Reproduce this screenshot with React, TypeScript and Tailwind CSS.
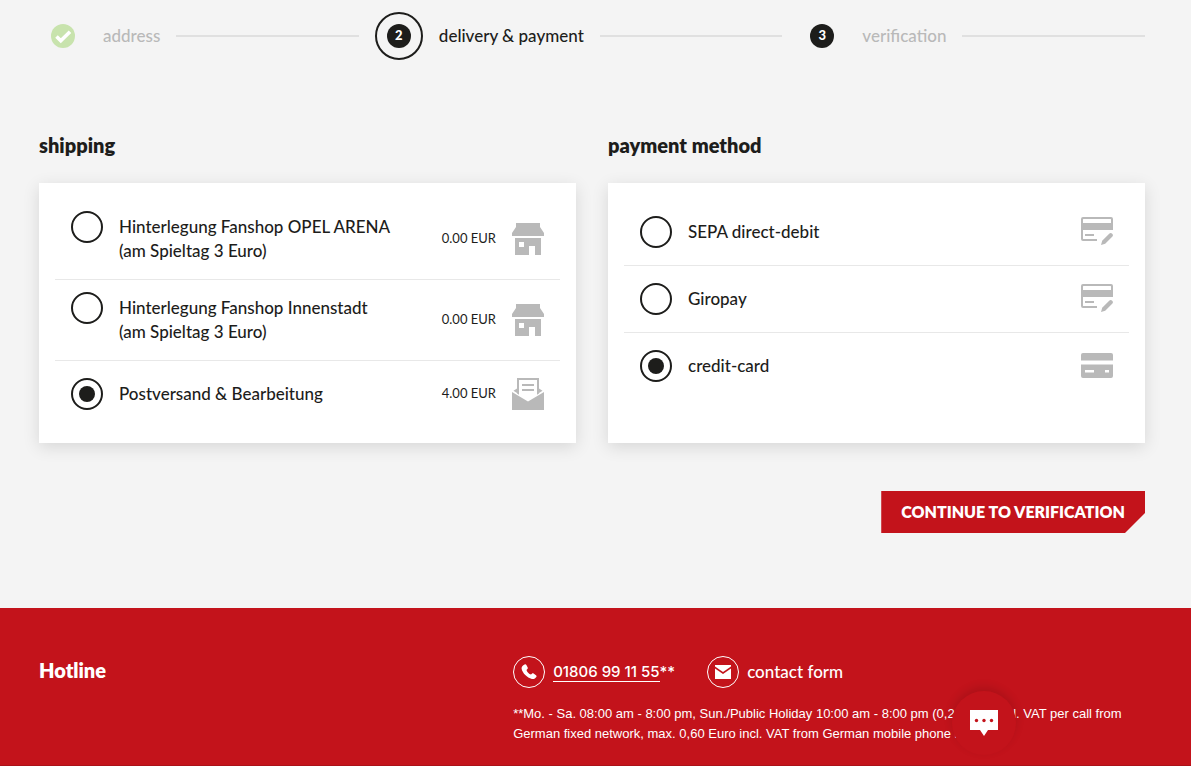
import { useState } from "react";

const ShopIcon = () => (
  <svg width="32" height="32" viewBox="0 0 32 32" fill="#b9b9b9" aria-hidden="true">
    <path d="M4 0h24v4l4 6v3H0v-3l4-6z" />
    <path fillRule="evenodd" d="M3 15h26v17h-6v-9h-6v9H3zM7 19v5h5v-5z" />
  </svg>
);

const LetterIcon = () => (
  <svg width="32" height="32" viewBox="0 0 32 32" fill="#b9b9b9" aria-hidden="true">
    <path d="M5 0h22v15.500l-2 1.200V2H7v14.700l-2-1.200z" />
    <path d="M10 6h12v2H10zM10 11h12v2H10z" />
    <path d="M5 10.500V15L1.500 12.800zM27 10.500V15l3.500-2.200z" />
    <path d="M0 14l16 9.500L32 14v18H0z" />
  </svg>
);

const DebitIcon = () => (
  <svg width="32" height="32" viewBox="0 0 32 32" fill="#b9b9b9" aria-hidden="true">
    <path
      fillRule="evenodd"
      d="M2 1h28a2 2 0 0 1 2 2v11H2v8.500a.5.500 0 0 0 .5.500H16v2H2a2 2 0 0 1-2-2V3a2 2 0 0 1 2-2zM2 3.500V7h28V3.500a.5.500 0 0 0-.5-.5h-27a.5.500 0 0 0-.5.500z"
    />
    <path d="M4 18h9v2H4z" />
    <path d="M20 29l1.200-4.200 7-7a2.100 2.100 0 0 1 3 3l-7 7z" />
  </svg>
);

const CreditIcon = () => (
  <svg width="32" height="32" viewBox="0 0 32 32" fill="#b9b9b9" aria-hidden="true">
    <path d="M2 3h28a2 2 0 0 1 2 2v5.500H0V5a2 2 0 0 1 2-2z" />
    <path
      fillRule="evenodd"
      d="M0 14.500h32V26a2 2 0 0 1-2 2H2a2 2 0 0 1-2-2zM4 20v2.500h9V20zM24 20v2.500h4V20z"
    />
  </svg>
);

const shippingOptions = [
  { id: "fanshop-arena", label: "Hinterlegung Fanshop OPEL ARENA", note: "(am Spieltag 3 Euro)", price: "0.00 EUR", icon: <ShopIcon /> },
  { id: "fanshop-city", label: "Hinterlegung Fanshop Innenstadt", note: "(am Spieltag 3 Euro)", price: "0.00 EUR", icon: <ShopIcon /> },
  { id: "post", label: "Postversand & Bearbeitung", price: "4.00 EUR", icon: <LetterIcon /> },
];

const paymentOptions = [
  { id: "sepa", label: "SEPA direct-debit", icon: <DebitIcon /> },
  { id: "giropay", label: "Giropay", icon: <DebitIcon /> },
  { id: "credit-card", label: "credit-card", icon: <CreditIcon /> },
];

interface Option {
  id: string;
  label: string;
  note?: string;
  price?: string;
  icon: React.ReactNode;
}

interface OptionCardProps {
  title: string;
  name: string;
  options: Option[];
  value: string;
  onChange: (id: string) => void;
}

function OptionCard({ title, name, options, value, onChange }: OptionCardProps) {
  return (
    <section className="flex flex-col">
      <h2 className="mb-6 text-xl leading-7 font-extrabold">{title}</h2>
      <div className="flex-1 bg-white p-4 shadow-[0_4px_16px_rgba(0,0,0,0.12)]">
        {options.map((option) => (
          <div key={option.id} className="border-b border-[#e8e8e8] px-4 py-4 last:border-b-0">
            <div className="flex min-h-[34px] items-center gap-4">
              <label htmlFor={option.id} className="flex flex-1 cursor-pointer items-start gap-4">
                <input
                  type="radio"
                  id={option.id}
                  name={name}
                  checked={value === option.id}
                  onChange={() => onChange(option.id)}
                  className="-my-1 size-8 shrink-0 appearance-none rounded-full border-2 border-[#1d1d1b] bg-white p-1.5 checked:bg-[#1d1d1b] checked:bg-clip-content"
                />
                <span className="leading-6 font-medium">
                  {option.label}
                  {option.note && <span className="block">{option.note}</span>}
                </span>
              </label>
              {option.price && <span className="text-[13px]">{option.price}</span>}
              {option.icon}
            </div>
          </div>
        ))}
      </div>
    </section>
  );
}

export default function App() {
  const [shipping, setShipping] = useState("post");
  const [payment, setPayment] = useState("credit-card");

  return (
    <div className="min-h-screen bg-[#f4f4f4] font-['Lato',sans-serif] text-[17px] text-[#1d1d1b]">
      <main className="pt-3 pr-[46px] pb-[75px] pl-[39px]">
        {/* Steps */}
        <nav aria-label="Checkout steps" className="flex items-center gap-4">
          <span className="flex size-12 items-center justify-center">
            <svg width="24" height="24" viewBox="0 0 24 24" aria-hidden="true">
              <circle cx="12" cy="12" r="12" fill="#c8e3ad" />
              <path d="M5.500 12.500l4.300 4.300L19 7.800" fill="none" stroke="#fff" strokeWidth="3.600" />
            </svg>
          </span>
          <a href="#address" className="font-medium text-[#b9b9b9]">address</a>
          <span className="h-0.5 flex-1 bg-[#e0e0e0]" />
          <span className="flex size-12 items-center justify-center rounded-full border-2 border-[#1d1d1b]">
            <span className="flex size-6 items-center justify-center rounded-full bg-[#1d1d1b] text-[13px] font-black text-white">2</span>
          </span>
          <span aria-current="step" className="font-medium">delivery &amp; payment</span>
          <span className="h-0.5 flex-1 bg-[#e0e0e0]" />
          <span className="flex size-12 items-center justify-center">
            <span className="flex size-6 items-center justify-center rounded-full bg-[#1d1d1b] text-[13px] font-black text-white">3</span>
          </span>
          <span className="font-medium text-[#b9b9b9]">verification</span>
          <span className="h-0.5 flex-1 bg-[#e0e0e0]" />
        </nav>

        {/* Options */}
        <div className="mt-[71px] grid grid-cols-2 gap-8">
          <OptionCard title="shipping" name="shipping" options={shippingOptions} value={shipping} onChange={setShipping} />
          <OptionCard title="payment method" name="payment" options={paymentOptions} value={payment} onChange={setPayment} />
        </div>

        <div className="mt-12 flex justify-end">
          <button
            type="button"
            className="h-[42px] cursor-pointer bg-[#c3131b] px-5 text-base font-extrabold text-white [clip-path:polygon(0_0,100%_0,100%_22px,calc(100%-20px)_100%,0_100%)]"
          >
            CONTINUE TO VERIFICATION
          </button>
        </div>
      </main>

      {/* Hotline */}
      <footer className="grid grid-cols-12 gap-x-8 border-b border-[#ab1118] bg-[#c3131b] pt-12 pr-[46px] pb-[21px] pl-[39px] text-white">
        <h2 className="col-span-5 text-xl leading-7 font-extrabold">Hotline</h2>
        <div className="col-span-7">
          <div className="flex items-center gap-8">
            <div className="flex items-center gap-2 font-medium">
              <span className="flex size-8 items-center justify-center rounded-full border border-white">
                <svg width="16" height="16" viewBox="0 0 16 16" fill="#fff" aria-hidden="true">
                  <path d="M3.600.6c.7-.5 1.400-.2 1.800.5l1.300 2.400c.3.600.2 1.200-.3 1.600l-.9.800c.5 1.900 2.400 3.900 4.500 4.700l.9-.9c.5-.5 1.100-.5 1.700-.1l2.400 1.600c.6.500.8 1.200.3 1.800-1 1.500-2.600 2.400-4.400 1.900C6 13.800 1.600 9.300.6 4.800.3 3 1.700 1.700 3.600.6z" />
                </svg>
              </span>
              <span className="font-['Inter',sans-serif] text-[15px]">
                <a href="tel:01806991155" className="border-b border-white">01806 99 11 55</a>**
              </span>
            </div>
            <a href="#contact" className="flex items-center gap-2 font-medium">
              <span className="flex size-8 items-center justify-center rounded-full border border-white">
                <svg width="16" height="14" viewBox="0 0 16 14" fill="#fff" aria-hidden="true">
                  <path d="M0 0h16v1.500L8 7 0 1.500z" />
                  <path d="M0 3.500L8 9l8-5.500V14H0z" />
                </svg>
              </span>
              contact form
            </a>
          </div>
          <p className="mt-4 font-['Liberation_Sans',sans-serif] text-[13px] leading-5">
            **Mo. - Sa. 08:00 am - 8:00 pm, Sun./Public Holiday 10:00 am - 8:00 pm (0,20 Euro incl. VAT per call from
            German fixed network, max. 0,60 Euro incl. VAT from German mobile phone networks)
          </p>
        </div>
      </footer>

      {/* Chat */}
      <button
        type="button"
        aria-label="Chat"
        className="fixed right-[175px] bottom-[11px] flex size-16 cursor-pointer items-center justify-center rounded-full bg-[#c3131b] shadow-[0_-4px_10px_rgba(0,0,0,0.12)]"
      >
        <svg width="28" height="26" viewBox="0 0 28 26" aria-hidden="true">
          <path d="M0 0h28v20H18l-4 6-4-6H0z" fill="#fff" />
          <g fill="#c3131b">
            <circle cx="6.500" cy="10.500" r="1.700" />
            <circle cx="14" cy="10.500" r="1.700" />
            <circle cx="21.500" cy="10.500" r="1.700" />
          </g>
        </svg>
      </button>
    </div>
  );
}
